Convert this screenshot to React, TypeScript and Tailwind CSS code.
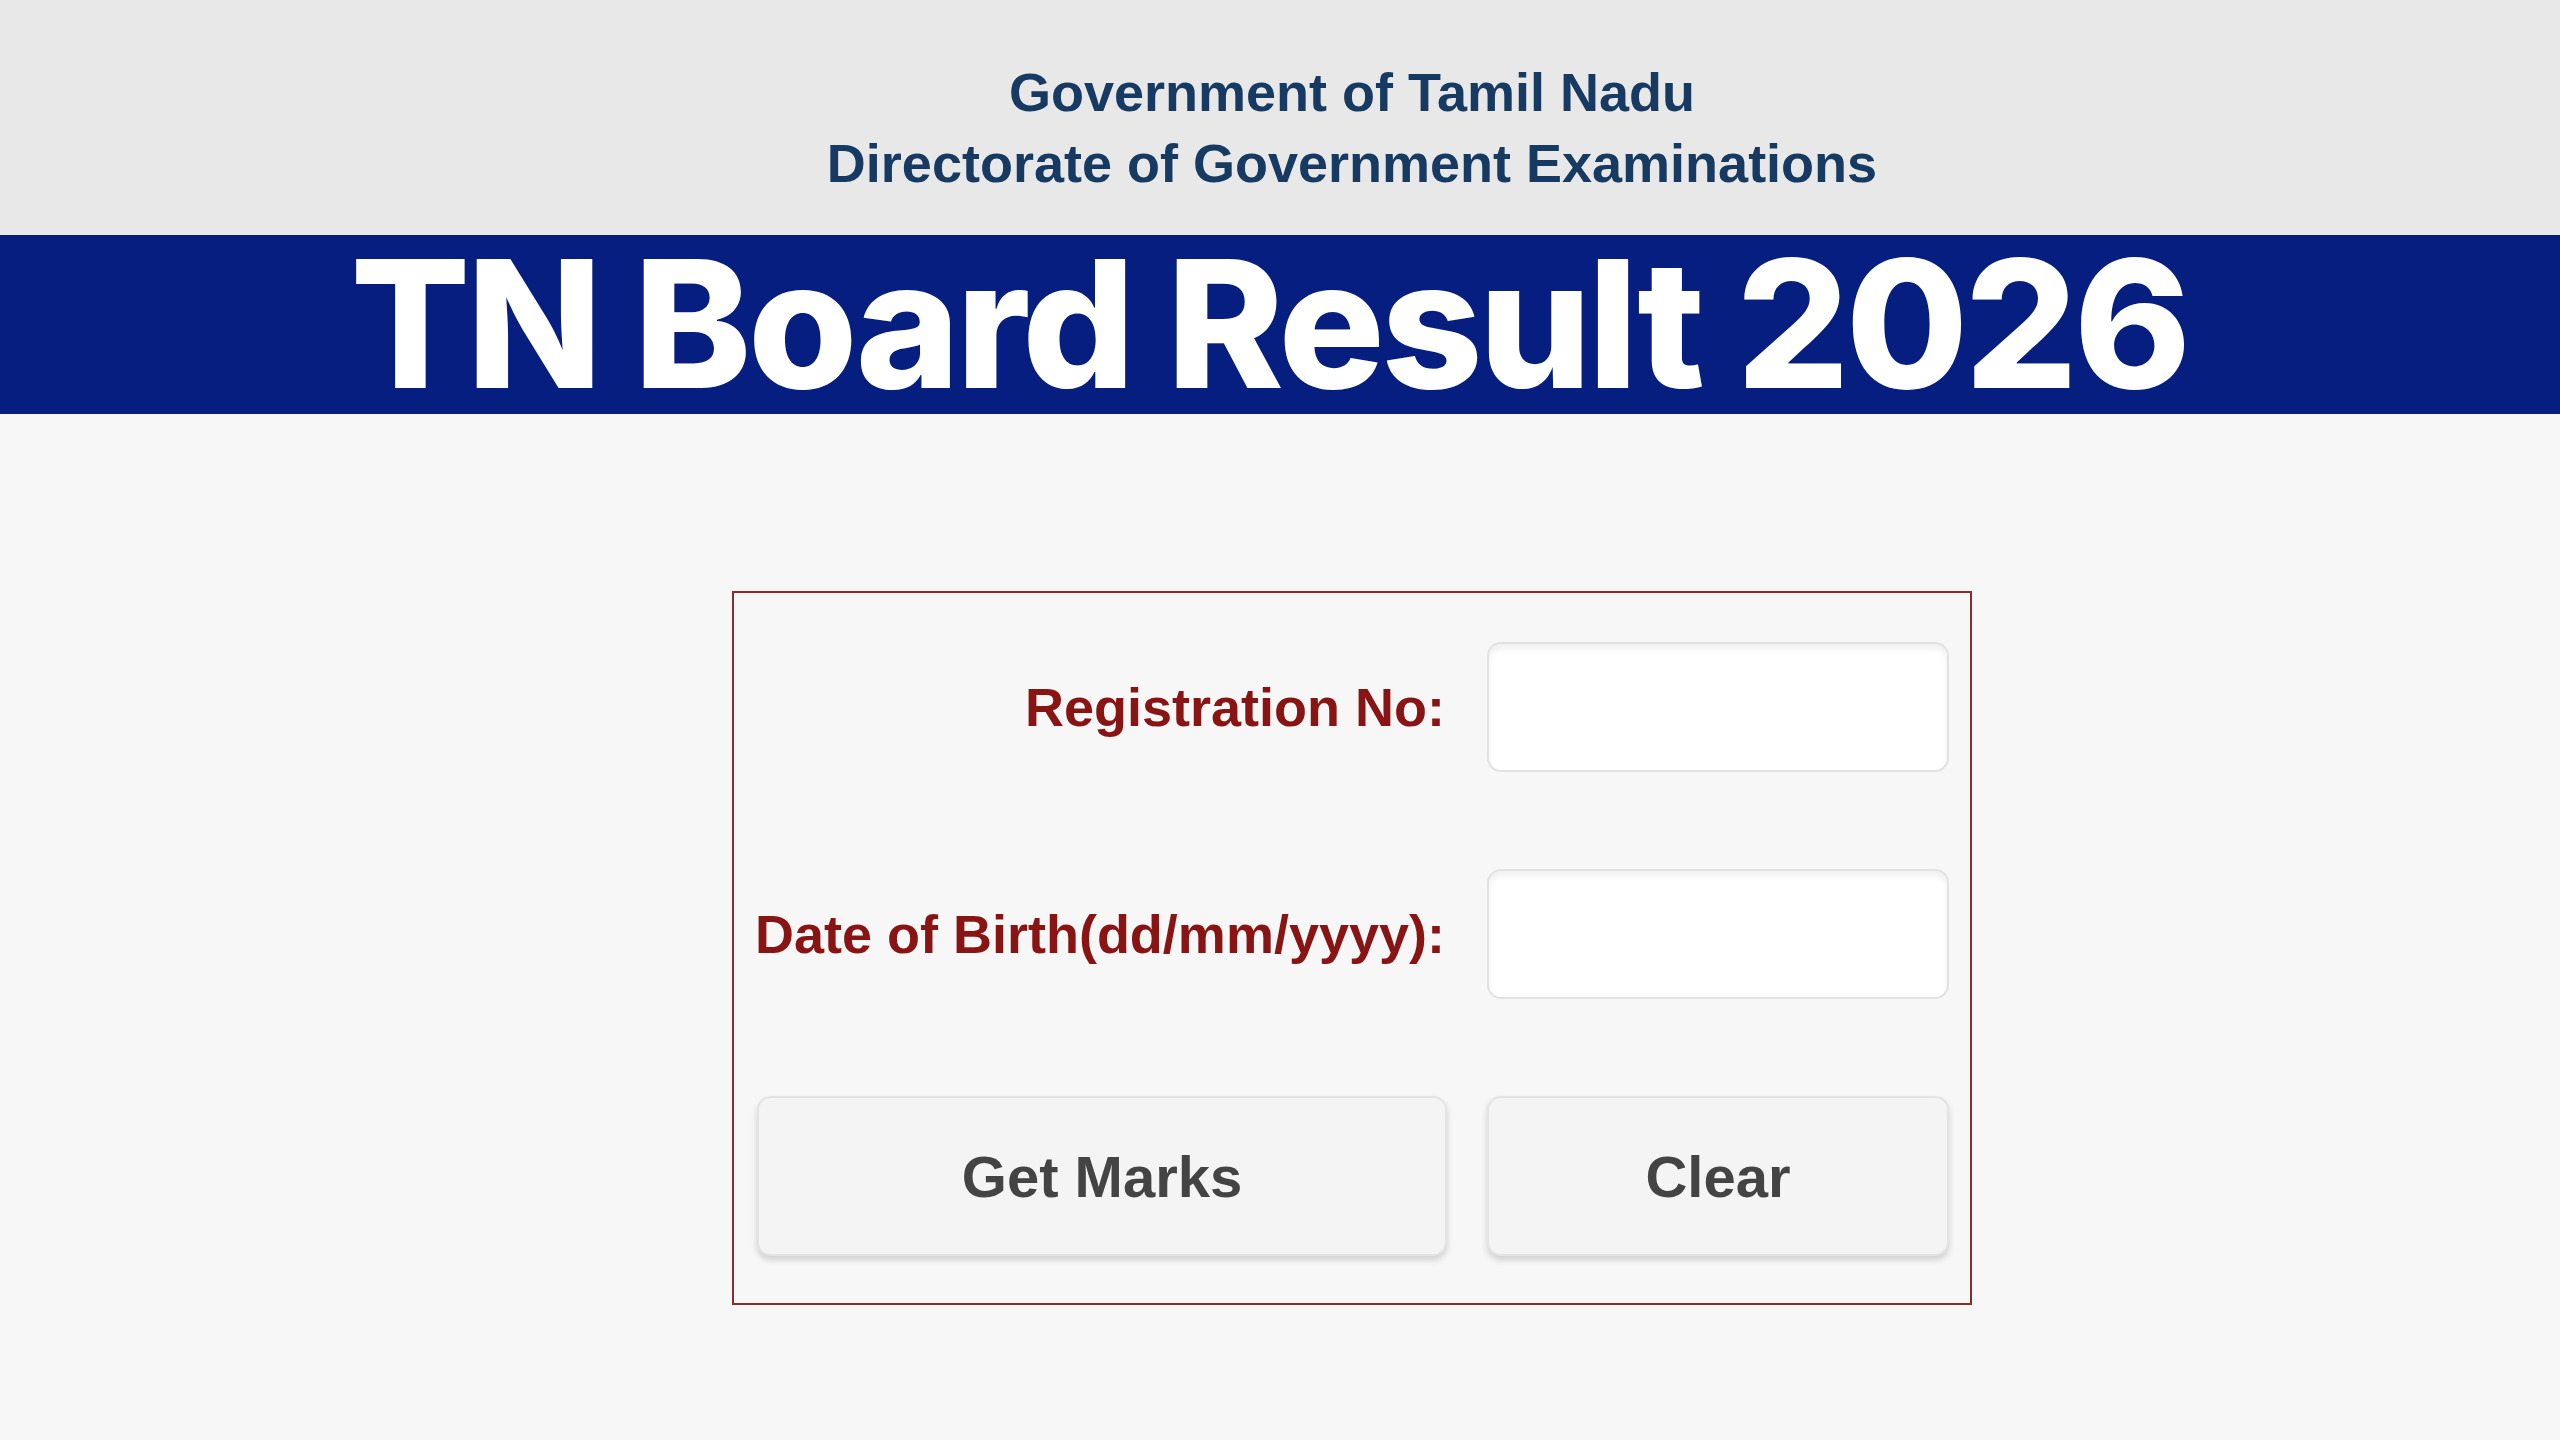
import React from 'react'

const arial = { fontFamily: '"Liberation Sans", Arial, sans-serif' }

function Field({ label, id }: { label: string; id: string }) {
  return (
    <>
      <label
        htmlFor={id}
        className="flex items-center justify-end whitespace-nowrap pr-[2px] text-[54px] font-bold text-[#891414]"
      >
        {label}
      </label>
      <input
        id={id}
        type="text"
        className="h-[130px] w-full rounded-[14px] border-2 border-[#e2e2e2] bg-white px-4 text-[40px] shadow-[inset_0_5px_6px_rgba(0,0,0,0.06)] outline-none"
      />
    </>
  )
}

export default function App() {
  return (
    <div className="min-h-screen w-full bg-[#f7f7f7]" style={arial}>
      {/* Department header */}
      <header className="h-[235px] bg-[#e8e8e8] pt-[57px] pl-[144px] text-center text-[54px] font-bold leading-[71px] text-[#163a62]">
        <p>Government of Tamil Nadu</p>
        <p>Directorate of Government Examinations</p>
      </header>

      <div className="flex h-[179px] items-center justify-center bg-[#061e80] pr-[22px]">
        <h1
          className="text-[177px] font-extrabold leading-none tracking-[-0.02em] text-white"
          style={{ fontFamily: 'Inter, "Noto Sans", sans-serif' }}
        >
          TN Board Result 2026
        </h1>
      </div>

      {/* Result login form */}
      <div className="flex justify-center pt-[177px] pl-[144px]">
        <form className="w-[1240px] border-2 border-[#8e2b2b] pt-[49px] pr-[21px] pb-[47px] pl-[23px]">
          <div className="grid grid-cols-[690px_1fr] gap-x-[40px] gap-y-[97px]">
            <Field label="Registration No:" id="regno" />
            <Field label="Date of Birth(dd/mm/yyyy):" id="dob" />
            <button
              type="submit"
              className="h-[160px] rounded-[14px] border-2 border-[#e4e4e4] bg-[#f4f4f4] text-[58px] font-bold text-[#444] shadow-[0_4px_6px_rgba(0,0,0,0.16)]"
            >
              Get Marks
            </button>
            <button
              type="reset"
              className="h-[160px] rounded-[14px] border-2 border-[#e4e4e4] bg-[#f4f4f4] text-[58px] font-bold text-[#444] shadow-[0_4px_6px_rgba(0,0,0,0.16)]"
            >
              Clear
            </button>
          </div>
        </form>
      </div>
    </div>
  )
}
